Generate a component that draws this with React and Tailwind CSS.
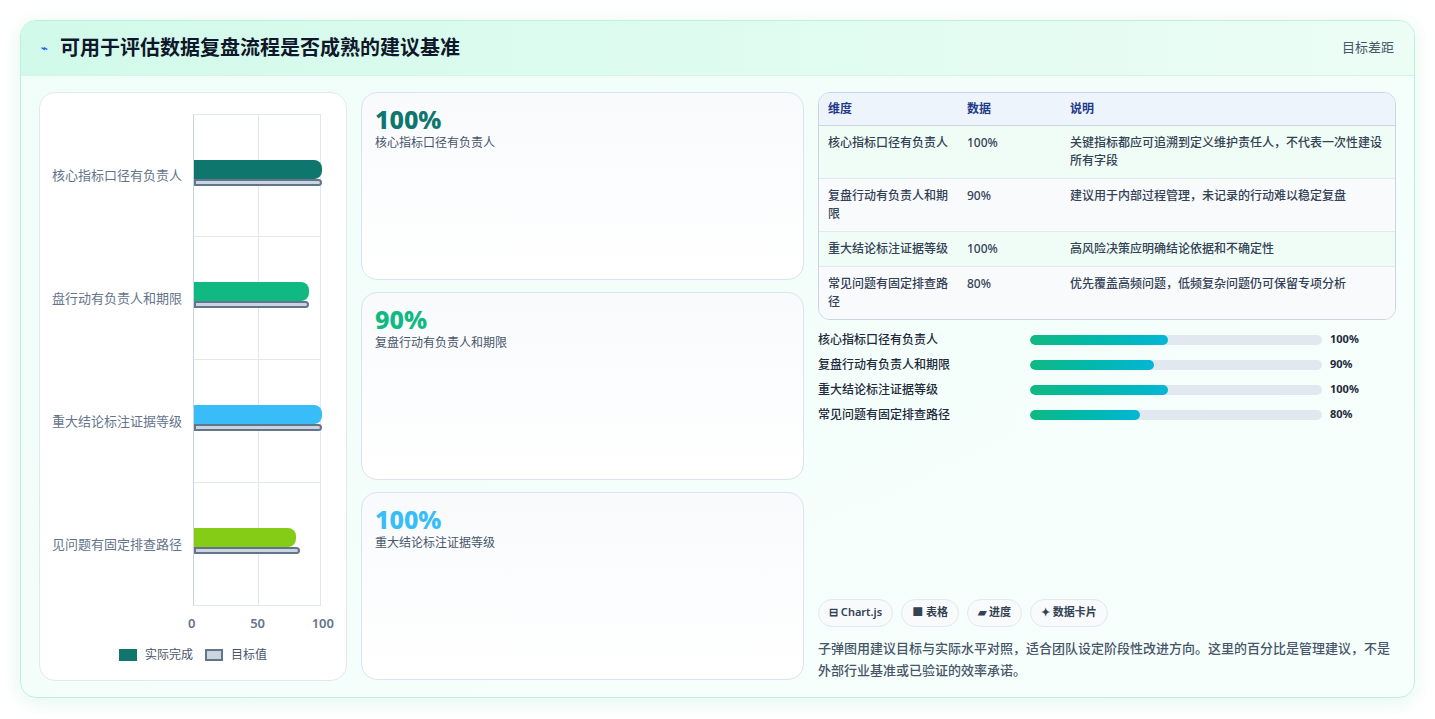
const rows = [
  { label: '核心指标口径有负责人', short: '核心指标口径有负责人', value: 100, target: 100, color: 'bg-[#0f766e]', text: 'text-[#0f766e]', note: '关键指标都应可追溯到定义维护责任人，不代表一次性建设所有字段', fill: 'w-[138px]' },
  { label: '复盘行动有负责人和期限', short: '盘行动有负责人和期限', value: 90, target: 90, color: 'bg-[#10b981]', text: 'text-[#10b981]', note: '建议用于内部过程管理，未记录的行动难以稳定复盘', fill: 'w-[124px]' },
  { label: '重大结论标注证据等级', short: '重大结论标注证据等级', value: 100, target: 100, color: 'bg-[#38bdf8]', text: 'text-[#38bdf8]', note: '高风险决策应明确结论依据和不确定性', fill: 'w-[138px]' },
  { label: '常见问题有固定排查路径', short: '见问题有固定排查路径', value: 80, target: 83, color: 'bg-[#84cc16]', text: 'text-[#84cc16]', note: '优先覆盖高频问题，低频复杂问题仍可保留专项分析', fill: 'w-[110px]' },
];

const font = { fontFamily: '"Noto Sans", "Noto Sans CJK SC", sans-serif' };

function Chart() {
  return (
    <div className="w-[308px] shrink-0 rounded-2xl border border-[#e2e8f0] bg-white flex flex-col px-3 pt-[21px] pb-4">
      <div className="flex">
        <div className="w-[141px] flex flex-col">
          {rows.map((r) => (
            <div key={r.label} className="h-[123px] flex items-center justify-end pr-[11px] text-[13px] text-[#64748b] whitespace-nowrap">
              {r.short}
            </div>
          ))}
        </div>
        <div className="relative w-[128px] border-l border-[#cbd5e1]">
          <div className="absolute left-[64px] top-0 bottom-0 border-l border-[#e2e8f0]" />
          <div className="absolute right-0 top-0 bottom-0 border-l border-[#e2e8f0]" />
          {rows.map((r, i) => (
            <div key={r.label} className={`relative h-[123px] flex flex-col justify-center pb-[6px] ${i === 0 ? 'border-t' : ''} border-b border-[#e2e8f0]`}>
              <div className={`h-[19px] rounded-r-lg ${r.color}`} style={{ width: `${r.value * 1.28}px` }} />
              <div className="h-[7px] rounded-r-sm bg-[#cbd5e1] border-2 border-[#64748b]" style={{ width: `${r.target * 1.28}px` }} />
            </div>
          ))}
        </div>
      </div>
      <div className="flex ml-[136px] w-[146px] justify-between text-[13px] font-semibold text-[#64748b] mt-2">
        <span>0</span><span className="ml-2">50</span><span>100</span>
      </div>
      <div className="flex items-center justify-center gap-2 mt-[12px] text-[12px] text-[#475569]">
        <span className="w-[18px] h-[12px] bg-[#0f766e]" />实际完成
        <span className="w-[18px] h-[12px] bg-[#cbd5e1] border-2 border-[#64748b] ml-1" />目标值
      </div>
    </div>
  );
}

export default function App() {
  return (
    <div className="min-h-screen bg-white p-5" style={font}>
      <div className="rounded-2xl border border-[#bff0de] bg-gradient-to-br from-[#f0fdf8] to-[#f7fffc] shadow-[0_4px_20px_rgba(16,185,129,0.12)] overflow-hidden">
        <div className="h-[55px] flex items-center justify-between px-5 bg-gradient-to-r from-[#d1faeb] to-[#ecfdf5] border-b border-[#d5f5e8]">
          <h1 className="flex items-center gap-3 text-[20px] font-bold text-[#0f172a]">
            <span className="text-[11px] text-[#2563eb]">⌁</span>可用于评估数据复盘流程是否成熟的建议基准
          </h1>
          <span className="text-[13px] text-[#475569]">目标差距</span>
        </div>
        <div className="flex gap-[14px] px-[18px] pt-[16px] pb-[16px]">
          <Chart />
          <div className="w-[443px] shrink-0 flex flex-col gap-3">
            {rows.slice(0, 3).map((r) => (
              <div key={r.label} className="h-[188px] rounded-2xl border border-[#dbe4f0] bg-gradient-to-b from-[#f8fafc] to-white px-[13px] pt-[10px]">
                <div className={`text-[25px] font-extrabold leading-[32px] ${r.text}`}>{r.value}%</div>
                <div className="text-[12px] text-[#475569] mt-[-1px]">{r.label}</div>
              </div>
            ))}
          </div>
          <div className="flex-1 flex flex-col">
            <div className="rounded-xl border border-[#cbd5e1] overflow-hidden text-[12px] text-[#334155]">
              <div className="flex h-[33px] items-center bg-[#eef4fc] border-b border-[#cbd5e1] font-semibold text-[#1e3a8a]">
                <div className="w-[148px] pl-[9px]">维度</div>
                <div className="w-[103px]">数据</div>
                <div className="flex-1">说明</div>
              </div>
              {rows.map((r, i) => (
                <div key={r.label} className={`flex py-[8px] leading-[18px] font-medium ${i % 2 ? 'bg-[#f8fafc]' : 'bg-[#f0fdf6]'} ${i < 3 ? 'border-b border-[#e2e8f0]' : ''}`}>
                  <div className="w-[148px] pl-[9px] pr-2">{r.label}</div>
                  <div className="w-[103px]">{r.value}%</div>
                  <div className="flex-1 pr-2">{r.note}</div>
                </div>
              ))}
            </div>
            <div className="flex flex-col gap-[6px] mt-[10px]">
              {rows.map((r) => (
                <div key={r.label} className="flex items-center h-[19px] text-[12px] font-medium text-[#1e293b]">
                  <div className="w-[212px]">{r.label}</div>
                  <div className="w-[292px] h-[10px] rounded-full bg-[#e2e8f0] overflow-hidden">
                    <div className={`h-full rounded-full bg-gradient-to-r from-[#10b981] to-[#06b6d4] ${r.fill}`} />
                  </div>
                  <div className="ml-2 font-bold text-[11px]">{r.value}%</div>
                </div>
              ))}
            </div>
            <div className="flex-1" />
            <div className="flex gap-2 text-[11px] font-semibold text-[#334155]">
              {['⊟ Chart.js', '■ 表格', '▰ 进度', '✦ 数据卡片'].map((t) => (
                <span key={t} className="h-[28px] px-[10px] flex items-center rounded-full border border-[#e2e8f0] bg-[#f8fafc]">{t}</span>
              ))}
            </div>
            <p className="mt-[10px] text-[13px] leading-[22px] text-[#475569] font-medium">
              子弹图用建议目标与实际水平对照，适合团队设定阶段性改进方向。这里的百分比是管理建议，不是外部行业基准或已验证的效率承诺。
            </p>
          </div>
        </div>
      </div>
    </div>
  );
}
